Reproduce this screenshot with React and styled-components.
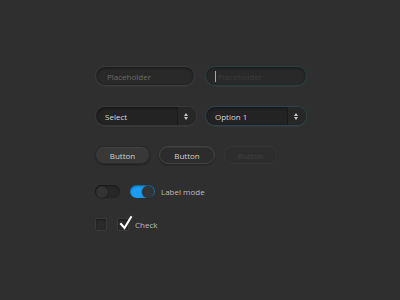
import React from "react";
import styled, { createGlobalStyle } from "styled-components";

const Global = createGlobalStyle`
  html, body { margin: 0; padding: 0; background: #2f2f2f; }
  body { width: 400px; height: 300px; overflow: hidden; font-family: "Open Sans", "Liberation Sans", sans-serif; }
`;

const Page = styled.div`
  width: 400px;
  height: 300px;
  box-sizing: border-box;
  padding: 66px 0 0 95px;
  display: flex;
  flex-direction: column;
  background: #2f2f2f;
`;

const Row = styled.div`
  display: flex;
  align-items: center;
  height: ${(p) => p.$h}px;
  margin-bottom: ${(p) => p.$mb}px;
  gap: ${(p) => p.$gap || 10}px;
`;

const Field = styled.div`
  box-sizing: border-box;
  width: ${(p) => p.$w || 100}px;
  height: 20px;
  border-radius: 10px;
  background: #292929;
  border: 1px solid ${(p) => (p.$focus ? "#24403f" : "#3b3b3b")};
  box-shadow: inset 0 1px 3px rgba(0,0,0,0.45), 0 1px 0 rgba(255,255,255,0.03);
  display: flex;
  align-items: center;
  padding-left: ${(p) => (p.$focus ? 9 : 11)}px;
  font-size: 8px;
  color: ${(p) => (p.$focus ? "#3c3c3c" : "#6b6b6b")};
`;

const Caret = styled.span`
  display: inline-block;
  width: 1px;
  height: 11px;
  background: #a8a8a8;
  margin-right: 2px;
`;

const Select = styled.div`
  box-sizing: border-box;
  width: 102px;
  height: 20px;
  border-radius: 10px;
  background: #232323;
  border: 1px solid ${(p) => (p.$focus ? "#2a4452" : "#373737")};
  box-shadow: inset 0 1px 3px rgba(0,0,0,0.5), 0 1px 0 rgba(255,255,255,0.04);
  display: flex;
  align-items: stretch;
  font-size: 8px;
  font-weight: 500;
  color: #d8d8d8;
`;

const SelectLabel = styled.div`
  flex: 1;
  display: flex;
  align-items: center;
  padding-left: 9px;
`;

const SelectArrows = styled.div`
  width: 16px;
  border-left: 1px solid #1a1a1a;
  border-radius: 0 9px 9px 0;
  background: #272727;
  display: flex;
  flex-direction: column;
  align-items: center;
  justify-content: center;
  gap: 1px;
  padding-right: 2px;
`;

const Tri = styled.span`
  width: 0;
  height: 0;
  border-left: 2px solid transparent;
  border-right: 2px solid transparent;
  ${(p) => (p.$up ? "border-bottom: 3px solid #c8c8c8;" : "border-top: 3px solid #c8c8c8;")}
`;

const Button = styled.div`
  box-sizing: border-box;
  width: ${(p) => p.$w}px;
  height: 18px;
  border-radius: 9px;
  display: flex;
  align-items: center;
  justify-content: center;
  font-size: 8px;
  font-weight: 500;
  color: ${(p) => (p.$variant === "disabled" ? "#424242" : "#cfcfcf")};
  background: ${(p) =>
    p.$variant === "primary" ? "#383838" : p.$variant === "secondary" ? "#2c2c2c" : "#2d2d2d"};
  border: 1px solid ${(p) =>
    p.$variant === "primary" ? "#2a2a2a" : p.$variant === "secondary" ? "#444444" : "#363636"};
  box-shadow: ${(p) =>
    p.$variant === "disabled"
      ? "none"
      : "0 1px 2px rgba(0,0,0,0.35), inset 0 1px 0 rgba(255,255,255,0.05)"};
`;

const Toggle = styled.div`
  box-sizing: border-box;
  width: 25px;
  height: 13px;
  border-radius: 7px;
  background: ${(p) => (p.$on ? "#1b9df3" : "#272727")};
  box-shadow: inset 0 1px 2px rgba(0,0,0,0.45);
  display: flex;
  align-items: center;
  justify-content: ${(p) => (p.$on ? "flex-end" : "flex-start")};
  padding: 0 1px;
`;

const Knob = styled.div`
  width: 12px;
  height: 12px;
  border-radius: 50%;
  background: ${(p) => (p.$on ? "#343434" : "#333333")};
  box-shadow: 0 0 2px rgba(0,0,0,0.6);
`;

const Label = styled.span`
  font-size: 8px;
  color: #bdbdbd;
  margin-left: -4px;
`;

const Box = styled.div`
  position: relative;
  box-sizing: border-box;
  width: 12px;
  height: 13px;
  border-radius: 2px;
  background: #2a2a2a;
  border: 1px solid #3a3a3a;
  box-shadow: inset 0 1px 2px rgba(0,0,0,0.4);
`;

const Tick = styled.svg`
  position: absolute;
  left: 2px;
  top: -3px;
  overflow: visible;
`;

export default function App() {
  return (
    <Page>
      <Global />
      <Row $h={20} $mb={20}>
        <Field $w={100}>Placeholder</Field>
        <Field $w={102} $focus>
          <Caret />
          Placeholder
        </Field>
      </Row>
      <Row $h={20} $mb={20} $gap={8}>
        <Select>
          <SelectLabel>Select</SelectLabel>
          <SelectArrows>
            <Tri $up />
            <Tri />
          </SelectArrows>
        </Select>
        <Select $focus>
          <SelectLabel>Option 1</SelectLabel>
          <SelectArrows>
            <Tri $up />
            <Tri />
          </SelectArrows>
        </Select>
      </Row>
      <Row $h={18} $mb={21} $gap={9}>
        <Button $w={55} $variant="primary">Button</Button>
        <Button $w={56} $variant="secondary">Button</Button>
        <Button $w={53} $variant="disabled">Button</Button>
      </Row>
      <Row $h={13} $mb={19}>
        <Toggle>
          <Knob />
        </Toggle>
        <Toggle $on>
          <Knob $on />
        </Toggle>
        <Label>Label mode</Label>
      </Row>
      <Row $h={14} $mb={0}>
        <Box />
        <Box>
          <Tick width="12" height="14" viewBox="0 0 12 14">
            <path d="M1 8 L4.5 12 L11 1" fill="none" stroke="#ffffff" strokeWidth="2" strokeLinecap="square" />
          </Tick>
        </Box>
        <Label>Check</Label>
      </Row>
    </Page>
  );
}
